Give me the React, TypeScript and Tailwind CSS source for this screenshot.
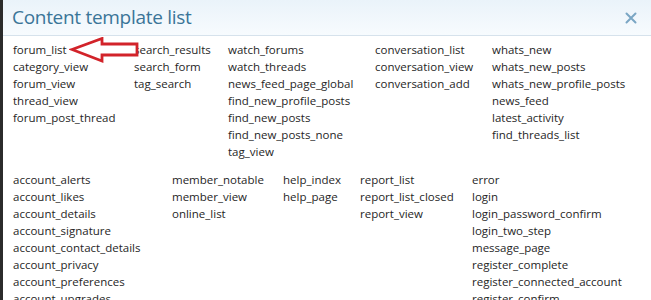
const group1 = [
  ['forum_list', 'category_view', 'forum_view', 'thread_view', 'forum_post_thread'],
  ['search_results', 'search_form', 'tag_search'],
  ['watch_forums', 'watch_threads', 'news_feed_page_global', 'find_new_profile_posts', 'find_new_posts', 'find_new_posts_none', 'tag_view'],
  ['conversation_list', 'conversation_view', 'conversation_add'],
  ['whats_new', 'whats_new_posts', 'whats_new_profile_posts', 'news_feed', 'latest_activity', 'find_threads_list'],
]

const group2 = [
  ['account_alerts', 'account_likes', 'account_details', 'account_signature', 'account_contact_details', 'account_privacy', 'account_preferences', 'account_upgrades'],
  ['member_notable', 'member_view', 'online_list'],
  ['help_index', 'help_page'],
  ['report_list', 'report_list_closed', 'report_view'],
  ['error', 'login', 'login_password_confirm', 'login_two_step', 'message_page', 'register_complete', 'register_connected_account', 'register_confirm'],
]

function Column({ items }: { items: string[] }) {
  return (
    <div className="flex flex-col">
      {items.map((t) => (
        <div key={t} className="h-[17px] leading-[17px] whitespace-nowrap">{t}</div>
      ))}
    </div>
  )
}

export default function App() {
  return (
    <div className="flex w-[651px] h-[300px] overflow-hidden bg-white" style={{ fontFamily: '"Open Sans", "Noto Sans", sans-serif' }}>
      <div className="w-[3px] shrink-0 bg-[#2b2b2b]" />
      <div className="flex-1 flex flex-col">
        {/* Header */}
        <div className="h-[36px] shrink-0 flex items-center justify-between pl-[9px] pr-[14px] bg-gradient-to-b from-[#eaf3fa] to-[#f7fbfe] border-b border-[#d6e2ec]">
          <h1 className="text-[19px] text-[#3a7598] tracking-[-0.3px]">Content template list</h1>
          <svg width="12" height="12" viewBox="0 0 12 12" className="mt-[1px]">
            <path d="M1.5 1.5 L10.5 10.5 M10.5 1.5 L1.5 10.5" stroke="#7aa6c4" strokeWidth="2" strokeLinecap="round" />
          </svg>
        </div>

        {/* Lists */}
        <div className="relative pl-[10px] pt-[5px] text-[11.5px] text-[#262626]">
          <div className="grid grid-cols-[121px_94px_147px_117px_1fr]">
            {group1.map((c, i) => <Column key={i} items={c} />)}
          </div>
          <div className="grid grid-cols-[159px_111px_77px_112px_1fr] mt-[11px]">
            {group2.map((c, i) => <Column key={i} items={c} />)}
          </div>

          {/* red callout arrow */}
          <svg className="absolute left-[66px] top-[1px]" width="72" height="28" viewBox="0 0 72 28">
            <path
              d="M3 12.5 L33 1.5 L33 7 L68 7 L68 18 L33 18 L33 24 Z"
              fill="white"
              stroke="#d2232a"
              strokeWidth="2.8"
              strokeLinejoin="miter"
            />
          </svg>
        </div>
      </div>
    </div>
  )
}
